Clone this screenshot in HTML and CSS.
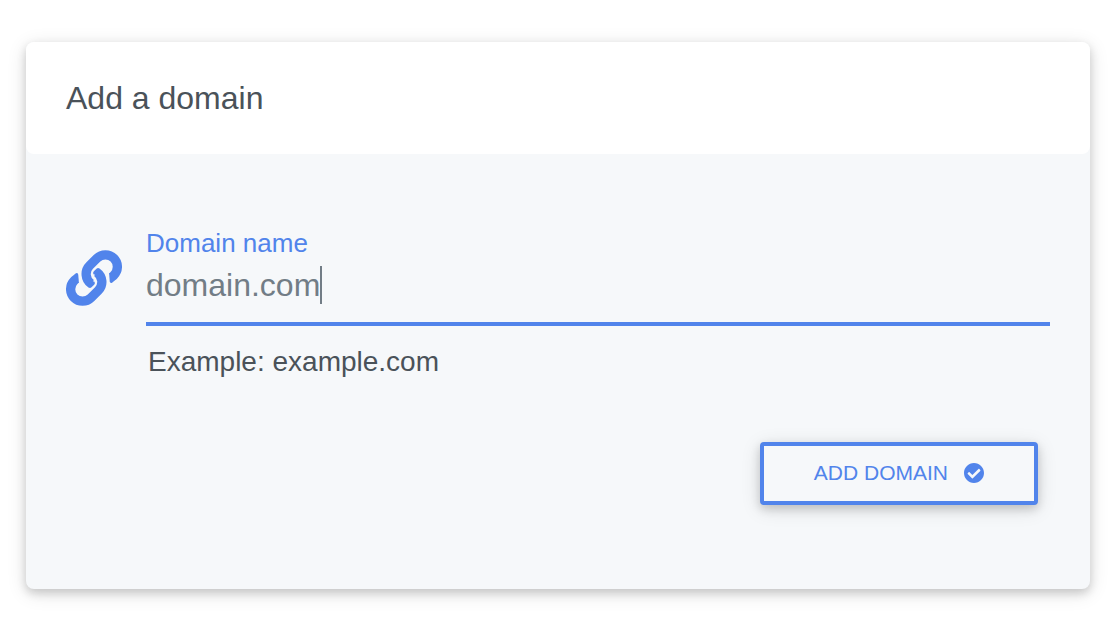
FILE: index.html
```html
<!DOCTYPE html>
<html lang="en">
<head>
<meta charset="utf-8">
<meta name="viewport" content="width=device-width, initial-scale=1">
<title>Add a domain</title>
<link rel="stylesheet" href="styles.css">
</head>
<body>
<main class="card">
  <header class="card-header">
    <h1 class="card-title">Add a domain</h1>
  </header>
  <form class="card-body">
    <div class="field">
      <svg class="field-icon" viewBox="18 17.5 169 169" aria-hidden="true">
        <defs>
          <g id="chain-half">
            <path fill="none" stroke="currentColor" stroke-width="28" d="M94 119.500A36 36 0 0 1 89.500 64.500L111.500 42.500A36 36 0 0 1 162.500 93.500L158 98"/>
            <path fill="currentColor" d="M148 87L150 112Q151 119 157 116L168 107.500L164 92Z"/>
            <path fill="currentColor" d="M86 131Q91 134 95 130L103 122Q107 118 104 113L95 110L84 122Z"/>
          </g>
        </defs>
        <use href="#chain-half"/>
        <use href="#chain-half" transform="rotate(180 102.500 102)"/>
      </svg>
      <div class="field-main">
        <label class="field-label" for="domain">Domain name</label>
        <div class="field-line">
          <input class="field-input" id="domain" name="domain" type="text" value="domain.com" size="10" aria-describedby="domain-hint">
          <span class="caret" aria-hidden="true"></span>
        </div>
        <p class="field-hint" id="domain-hint">Example: example.com</p>
      </div>
    </div>
    <div class="actions">
      <button class="button" type="button">
        <span>ADD DOMAIN</span>
        <svg class="button-icon" viewBox="8 8 496 496" aria-hidden="true"><path fill="currentColor" d="M504 256c0 136.967-111.033 248-248 248S8 392.967 8 256 119.033 8 256 8s248 111.033 248 248zM227.314 387.314l184-184c6.248-6.248 6.248-16.379 0-22.627l-22.627-22.627c-6.248-6.249-16.379-6.249-22.628 0L216 308.118l-70.059-70.059c-6.248-6.248-16.379-6.248-22.628 0l-22.627 22.627c-6.248 6.248-6.248 16.379 0 22.627l104 104c6.249 6.249 16.379 6.249 22.628.001z"/></svg>
      </button>
    </div>
  </form>
</main>
</body>
</html>
```
FILE: styles.css
```css
* {
  box-sizing: border-box;
}

body {
  margin: 0;
  padding: 42px 30px 34px 26px;
  background: #fff;
  color: #4a5259;
  font-family: "Liberation Sans", Arial, sans-serif;
}

.card {
  border-radius: 8px;
  background: #f6f8fa;
  box-shadow: 0 4px 10px rgba(0, 0, 0, 0.16), 0 4px 20px rgba(0, 0, 0, 0.12);
}

.card-header {
  padding: 36px 40px;
  border-radius: 8px;
  background: #fff;
}

.card-title {
  margin: 0;
  font-size: 32px;
  font-weight: 400;
  line-height: 40px;
}

.card-body {
  padding: 72px 40px 84px;
}

.field {
  display: flex;
  gap: 24px;
}

.field-icon {
  flex: none;
  width: 56px;
  height: 56px;
  margin-top: 24px;
  color: #5184eb;
}

.field-main {
  flex: 1;
  min-width: 0;
}

.field-label {
  display: block;
  color: #5184eb;
  font-size: 26px;
  line-height: 34px;
}

.field-line {
  display: flex;
  padding: 6px 0 18px;
  border-bottom: 4px solid #5184eb;
}

.field-input {
  field-sizing: content;
  min-width: 0;
  padding: 0;
  border: 0;
  outline: 0;
  background: transparent;
  color: #727d86;
  font: inherit;
  font-size: 32px;
  line-height: 38px;
}

.caret {
  width: 2px;
  background: #727d86;
}

.field-hint {
  margin: 0;
  padding: 18px 2px;
  font-size: 28px;
  line-height: 36px;
}

.actions {
  display: flex;
  justify-content: flex-end;
  padding: 44px 12px 0;
}

.button {
  display: flex;
  align-items: center;
  justify-content: center;
  gap: 16px;
  min-width: 278px;
  padding: 15px 50px 17px;
  border: 4px solid #5184eb;
  border-radius: 4px;
  background: #f6f8fa;
  box-shadow: 0 4px 10px rgba(0, 0, 0, 0.16), 0 4px 20px rgba(0, 0, 0, 0.12);
  color: #5184eb;
  font: inherit;
  font-size: 21px;
  line-height: 23px;
}

.button-icon {
  width: 20px;
  height: 20px;
}
```
